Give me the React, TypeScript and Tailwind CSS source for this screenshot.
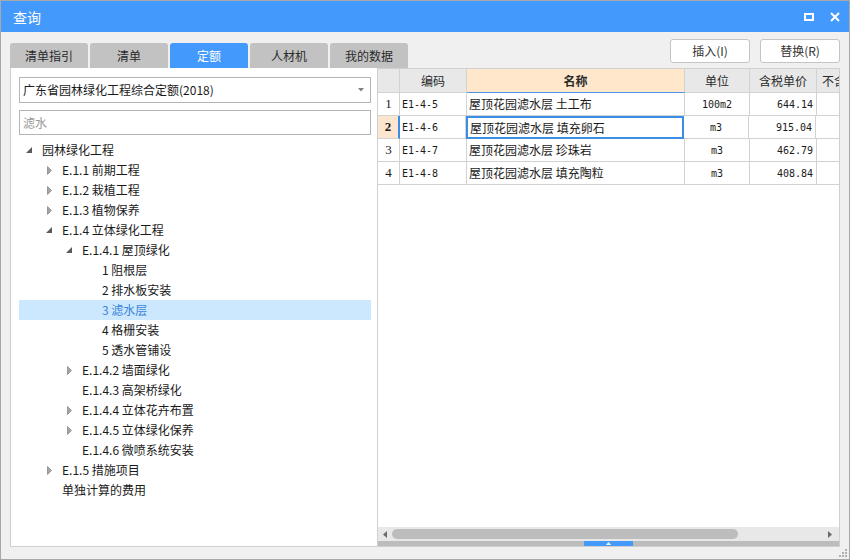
import React from "react";

type Node = { level: number; text: string; icon?: "open" | "closed"; selected?: boolean };

const tree: Node[] = [
  { level: 0, text: "园林绿化工程", icon: "open" },
  { level: 1, text: "E.1.1 前期工程", icon: "closed" },
  { level: 1, text: "E.1.2 栽植工程", icon: "closed" },
  { level: 1, text: "E.1.3 植物保养", icon: "closed" },
  { level: 1, text: "E.1.4 立体绿化工程", icon: "open" },
  { level: 2, text: "E.1.4.1 屋顶绿化", icon: "open" },
  { level: 3, text: "1 阻根层" },
  { level: 3, text: "2 排水板安装" },
  { level: 3, text: "3 滤水层", selected: true },
  { level: 3, text: "4 格栅安装" },
  { level: 3, text: "5 透水管铺设" },
  { level: 2, text: "E.1.4.2 墙面绿化", icon: "closed" },
  { level: 2, text: "E.1.4.3 高架桥绿化" },
  { level: 2, text: "E.1.4.4 立体花卉布置", icon: "closed" },
  { level: 2, text: "E.1.4.5 立体绿化保养", icon: "closed" },
  { level: 2, text: "E.1.4.6 微喷系统安装" },
  { level: 1, text: "E.1.5 措施项目", icon: "closed" },
  { level: 1, text: "单独计算的费用" },
];

const rows = [
  { n: "1", code: "E1-4-5", name: "屋顶花园滤水层 土工布", unit: "100m2", price: "644.14" },
  { n: "2", code: "E1-4-6", name: "屋顶花园滤水层 填充卵石", unit: "m3", price: "915.04", current: true },
  { n: "3", code: "E1-4-7", name: "屋顶花园滤水层 珍珠岩", unit: "m3", price: "462.79" },
  { n: "4", code: "E1-4-8", name: "屋顶花园滤水层 填充陶粒", unit: "m3", price: "408.84" },
];

const tabs = ["清单指引", "清单", "定额", "人材机", "我的数据"];

function TreeIcon({ kind }: { kind?: "open" | "closed" }) {
  if (kind === "open")
    return (
      <svg width="6" height="6" viewBox="0 0 6 6">
        <polygon points="6,0 6,6 0,6" fill="#5a5a5a" />
      </svg>
    );
  if (kind === "closed")
    return (
      <svg width="5" height="9" viewBox="0 0 5 9">
        <polygon points="0.5,0.5 4.5,4.5 0.5,8.5" fill="#a6a6a6" stroke="#8a8a8a" strokeWidth="0.8" />
      </svg>
    );
  return null;
}

const mono = "font-['DejaVu_Sans_Mono','Liberation_Mono',monospace] text-[10px]";

export default function App() {
  return (
    <div className="relative w-[850px] h-[560px] bg-[#f0f0f0] border border-[#a8a8a8] flex flex-col overflow-hidden font-['Noto_Sans_CJK_SC','Noto_Sans',sans-serif] text-[12px] text-[#1a1a1a]">
      {/* Title bar */}
      <div className="h-[31px] shrink-0 bg-[#4499fc] flex items-center justify-between pl-[12px] pr-[9px] text-white">
        <span className="text-[14px] leading-none">查询</span>
        <div className="flex items-center gap-[16px]">
          <div className="w-[10px] h-[8px] border-2 border-white" />
          <svg width="10" height="10" viewBox="0 0 10 10">
            <path d="M1 1 L9 9 M9 1 L1 9" stroke="white" strokeWidth="2" />
          </svg>
        </div>
      </div>

      {/* Body */}
      <div className="flex-1 flex flex-col px-[9px] pb-[12px]">
        {/* tabs + buttons */}
        <div className="h-[36px] shrink-0 flex justify-between">
          <div className="flex gap-[2px] items-end">
            {tabs.map((t) => (
              <div
                key={t}
                className={
                  "w-[78px] h-[25px] rounded-t-[3px] flex items-center justify-center leading-none text-[12px] " +
                  (t === "定额" ? "bg-[#4499fc] text-white" : "bg-[#c2c2c2] text-[#2a2a2a]")
                }
              >
                {t}
              </div>
            ))}
          </div>
          <div className="flex gap-[10px] mt-[7px] h-[24px]">
            <div className="w-[80px] h-[24px] bg-white border border-[#c4c4c4] rounded-[3px] flex items-center justify-center text-[#333]">
              插入(I)
            </div>
            <div className="w-[80px] h-[24px] bg-white border border-[#c4c4c4] rounded-[3px] flex items-center justify-center text-[#333]">
              替换(R)
            </div>
          </div>
        </div>

        {/* main */}
        <div className="flex h-[479px]">
          {/* Left panel */}
          <div className="w-[368px] shrink-0 bg-white border-l border-r border-b border-[#d0d0d0] pt-[9px] pl-[8px] pr-[6px] flex flex-col">
            <div className="h-[26px] border border-[#b4b4b4] flex items-center justify-between pl-[3px] pr-[6px]">
              <span className="leading-none">广东省园林绿化工程综合定额(2018)</span>
              <svg width="6" height="4" viewBox="0 0 6 4">
                <polygon points="0,0 6,0 3,3.5" fill="#808080" />
              </svg>
            </div>
            <div className="mt-[7px] h-[25px] border border-[#b4b4b4] flex items-center pl-[3px]">
              <span className="leading-none text-[#9a9a9a]">滤水</span>
            </div>
            <div className="mt-[5px] flex flex-col">
              {tree.map((n, i) => (
                <div
                  key={i}
                  className={"h-[20px] flex items-center " + (n.selected ? "bg-[#cce8ff] text-[#3a86d8]" : "")}
                  style={{ paddingLeft: n.level * 20 }}
                >
                  <div className="w-[20px] h-[20px] flex items-center justify-center">
                    <TreeIcon kind={n.icon} />
                  </div>
                  <span className="ml-[3px] leading-none whitespace-nowrap">{n.text}</span>
                </div>
              ))}
            </div>
          </div>

          {/* Right panel */}
          <div className="w-[462px] shrink-0 bg-white border-t border-r border-b border-[#d0d0d0] flex flex-col overflow-hidden">
            {/* header */}
            <div className="flex h-[24px] shrink-0">
              <div className="w-[22px] shrink-0 bg-[#e8e8e8] border-r border-b border-[#d2d2d2]" />
              <div className="w-[67px] shrink-0 bg-[#e8e8e8] border-r border-b border-[#d2d2d2] flex items-center justify-center leading-none text-[#2a2a2a]">编码</div>
              <div className="w-[218px] shrink-0 bg-[#ffe7cc] border-r border-[#d2d2d2] border-b border-b-[#4a95ea] flex items-center justify-center leading-none font-bold text-[#2a2a2a]">名称</div>
              <div className="w-[65px] shrink-0 bg-[#e8e8e8] border-r border-b border-[#d2d2d2] flex items-center justify-center leading-none text-[#2a2a2a]">单位</div>
              <div className="w-[67px] shrink-0 bg-[#e8e8e8] border-r border-b border-[#d2d2d2] flex items-center justify-center leading-none text-[#2a2a2a]">含税单价</div>
              <div className="w-[40px] shrink-0 bg-[#e8e8e8] border-b border-[#d2d2d2] flex items-center pl-[5px] leading-none text-[#2a2a2a] whitespace-nowrap overflow-hidden">不含税单价</div>
            </div>
            {rows.map((r) => (
              <div key={r.n} className="flex h-[23px] shrink-0">
                <div
                  className={
                    "w-[22px] shrink-0 border-b border-[#d2d2d2] flex items-center justify-center font-['Liberation_Serif',serif] text-[13px] " +
                    (r.current ? "bg-[#fde6cf] font-bold border-r-2 border-r-[#3a8ee6]" : "border-r")
                  }
                >
                  {r.n}
                </div>
                <div className={"w-[67px] shrink-0 border-r border-b border-[#d2d2d2] flex items-center pl-[2px] " + mono} style={r.current ? { width: 66 } : undefined}>
                  {r.code}
                </div>
                <div
                  className={
                    "w-[218px] shrink-0 flex items-center pl-[2px] leading-none whitespace-nowrap " +
                    (r.current ? "border-2 border-[#3a8ee6]" : "border-r border-b border-[#d2d2d2]")
                  }
                >
                  {r.name}
                </div>
                <div className={"w-[65px] shrink-0 border-r border-b border-[#d2d2d2] flex items-center justify-center " + mono}>{r.unit}</div>
                <div className={"w-[67px] shrink-0 border-r border-b border-[#d2d2d2] flex items-center justify-end pr-[3px] " + mono}>{r.price}</div>
                <div className="w-[40px] shrink-0 border-b border-[#d2d2d2]" />
              </div>
            ))}
            <div className="flex-1" />
            {/* horizontal scrollbar */}
            <div className="h-[14px] shrink-0 bg-[#e8e8e8] flex items-center">
              <div className="w-[14px] flex items-center justify-center">
                <svg width="4" height="7" viewBox="0 0 4 7">
                  <polygon points="4,0 4,7 0,3.5" fill="#6a6a6a" />
                </svg>
              </div>
              <div className="w-[346px] h-[10px] rounded-full bg-[#bdbdbd]" />
              <div className="flex-1" />
              <div className="w-[14px] flex items-center justify-center mr-[2px]">
                <svg width="4" height="7" viewBox="0 0 4 7">
                  <polygon points="0,0 4,3.5 0,7" fill="#6a6a6a" />
                </svg>
              </div>
            </div>
            <div className="h-[5px] shrink-0 bg-[#bcbcbc] flex justify-center pr-[1px]">
              <div className="w-[49px] h-[5px] bg-[#4499fc] flex items-center justify-center">
                <svg width="5" height="3" viewBox="0 0 5 3">
                  <polygon points="2.5,0 5,3 0,3" fill="white" />
                </svg>
              </div>
            </div>
          </div>
        </div>
      </div>

      {/* resize grip */}
      <svg className="absolute right-[1px] bottom-[1px]" width="9" height="9" viewBox="0 0 9 9">
        <rect x="6" y="0" width="2" height="2" fill="#b0b0b0" />
        <rect x="3" y="3" width="2" height="2" fill="#b0b0b0" />
        <rect x="6" y="3" width="2" height="2" fill="#b0b0b0" />
        <rect x="0" y="6" width="2" height="2" fill="#b0b0b0" />
        <rect x="3" y="6" width="2" height="2" fill="#b0b0b0" />
        <rect x="6" y="6" width="2" height="2" fill="#b0b0b0" />
      </svg>
    </div>
  );
}
